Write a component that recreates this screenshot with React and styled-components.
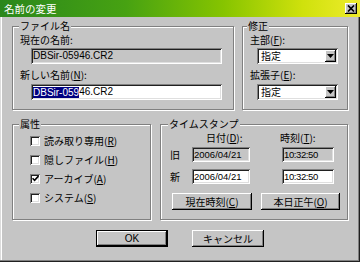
import React from "react";
import styled, { createGlobalStyle } from "styled-components";

const FACE = "#c5c5c5";
const JP = `"Noto Sans CJK JP", "Liberation Sans", sans-serif`;
const LATIN = `"Liberation Sans", "Noto Sans CJK JP", sans-serif`;

const raised = `inset -1px -1px #000, inset 1px 1px #fff, inset -2px -2px #808080`;
const sunken = `inset 1px 1px #808080, inset -1px -1px #fff, inset 2px 2px #202020, inset -2px -2px #dfdfdf`;

const GlobalStyle = createGlobalStyle`
  html, body {
    margin: 0;
    padding: 0;
    background: ${FACE};
  }
  body {
    font-family: ${JP};
    font-size: 10px;
    line-height: 12px;
    color: #000;
  }
  u {
    text-underline-offset: 1px;
  }
`;

const Window = styled.div`
  width: 360px;
  height: 262px;
  box-sizing: border-box;
  background: ${FACE};
  display: flex;
  flex-direction: column;
  overflow: hidden;
  box-shadow: inset -1px -1px #202020, inset -2px -2px #808080,
    inset 1px 0 #dcdcdc, inset 2px 0 #fff;
`;

const TitleBar = styled.div`
  flex: none;
  height: 17px;
  display: flex;
  align-items: center;
  justify-content: space-between;
  padding: 0 3px 0 4px;
  background: linear-gradient(
    90deg,
    #2a871c 0%,
    #47a212 35%,
    #86c400 62%,
    #cfe10c 84%,
    #eeec2c 100%
  );
  color: #fff;
  font-size: 10.5px;
  line-height: 17px;
`;

const CloseButton = styled.div`
  width: 12px;
  height: 11px;
  background: ${FACE};
  box-shadow: ${raised};
  display: flex;
  align-items: center;
  justify-content: center;
`;

const Body = styled.div`
  flex: 1;
  display: flex;
  flex-direction: column;
  padding: 0 12px;
`;

const Row = styled.div`
  display: flex;
  gap: ${(p) => p.$gap}px;
  margin-top: ${(p) => p.$mt}px;
  justify-content: ${(p) => (p.$center ? "center" : "flex-start")};
`;

const Group = styled.fieldset`
  margin: 0;
  padding: 0;
  min-width: 0;
  box-sizing: border-box;
  width: ${(p) => p.$w}px;
  height: ${(p) => p.$h}px;
  border: 1px solid #808080;
  box-shadow: inset 1px 1px #fff, 1px 1px #fff;
`;

const Legend = styled.legend`
  margin-left: ${(p) => p.$ml ?? 6}px;
  padding: 0 1px;
  font-size: 10px;
  line-height: 12px;
  background: ${FACE};
`;

const Stack = styled.div`
  display: flex;
  flex-direction: column;
  align-items: flex-start;
  padding-left: ${(p) => p.$pl}px;
`;

const Label = styled.div`
  margin-top: ${(p) => p.$mt || 0}px;
  height: 12px;
  white-space: nowrap;
`;

const Field = styled.div`
  box-sizing: border-box;
  width: ${(p) => p.$w}px;
  height: ${(p) => p.$h || 16}px;
  margin-left: ${(p) => p.$ml || 0}px;
  margin-top: ${(p) => p.$mt || 0}px;
  padding: 0 2px;
  display: flex;
  align-items: center;
  background: ${(p) => (p.$disabled ? FACE : "#fff")};
  box-shadow: ${sunken};
  font-family: ${LATIN};
  font-size: ${(p) => p.$fs || 10}px;
  letter-spacing: ${(p) => p.$ls || 0}px;
  white-space: nowrap;
  overflow: hidden;
`;

const Selected = styled.span`
  background: #000080;
  color: #fff;
  line-height: 11px;
`;

const Combo = styled.div`
  box-sizing: border-box;
  width: 81px;
  height: 16px;
  margin-left: 7px;
  margin-top: ${(p) => p.$mt || 0}px;
  padding: 2px;
  display: flex;
  align-items: center;
  justify-content: space-between;
  background: #fff;
  box-shadow: ${sunken};
`;

const ComboText = styled.span`
  padding-left: 2px;
  line-height: 12px;
`;

const ComboButton = styled.div`
  width: 11px;
  height: 12px;
  background: ${FACE};
  box-shadow: ${raised};
  display: flex;
  align-items: center;
  justify-content: center;
`;

const CheckRow = styled.div`
  height: 19px;
  margin-top: ${(p) => p.$mt || 0}px;
  display: flex;
  align-items: center;
  gap: 4px;
  white-space: nowrap;
`;

const CheckBox = styled.div`
  width: 10px;
  height: 10px;
  flex: none;
  background: #fff;
  box-shadow: ${sunken};
  display: flex;
  align-items: center;
  justify-content: center;
`;

const TsRow = styled.div`
  display: grid;
  grid-template-columns: 24px 58px 32px 52px;
  align-items: center;
  height: ${(p) => p.$h}px;
  margin-top: ${(p) => p.$mt}px;
`;

const TsCell = styled.div`
  grid-column: ${(p) => p.$col};
  margin-left: ${(p) => p.$ml || 0}px;
  white-space: nowrap;
`;

const ButtonRow = styled.div`
  display: flex;
  gap: 9px;
  margin-top: 9px;
  padding-left: 4px;
`;

const Button = styled.div`
  box-sizing: border-box;
  width: ${(p) => p.$w}px;
  height: 17px;
  display: flex;
  align-items: center;
  justify-content: center;
  background: ${FACE};
  border: ${(p) => (p.$default ? "1px solid #000" : "none")};
  box-shadow: ${raised};
  font-size: 10px;
  white-space: nowrap;
`;

const Latin = styled.span`
  font-family: ${LATIN};
`;

const DownArrow = () => (
  <svg width="7" height="4" viewBox="0 0 7 4">
    <path d="M0 0h7L3.5 4z" fill="#000" />
  </svg>
);

const CheckMark = () => (
  <svg width="7" height="7" viewBox="0 0 7 7">
    <path d="M0.5 3.2L2.6 5.4L6.5 1" stroke="#000" strokeWidth="1.6" fill="none" />
  </svg>
);

const SelectBox = ({ mt }) => (
  <Combo $mt={mt}>
    <ComboText>指定</ComboText>
    <ComboButton>
      <DownArrow />
    </ComboButton>
  </Combo>
);

export default function App() {
  return (
    <>
      <GlobalStyle />
      <Window>
        <TitleBar>
          <span>名前の変更</span>
          <CloseButton>
            <svg width="8" height="7" viewBox="0 0 8 7">
              <path d="M1 0.5L7 6.5M7 0.5L1 6.5" stroke="#000" strokeWidth="1.7" />
            </svg>
          </CloseButton>
        </TitleBar>
        <Body>
          <Row $mt={3} $gap={8}>
            <Group $w={222} $h={90}>
              <Legend>ファイル名</Legend>
              <Stack $pl={7}>
                <Label $mt={2}>現在の名前:</Label>
                <Field $w={191} $ml={11} $mt={2} $disabled>
                  DBSir-05946.CR2
                </Field>
                <Label $mt={5}>
                  新しい名前(<u>N</u>):
                </Label>
                <Field $w={191} $ml={11} $mt={3}>
                  <Selected>DBSir-059</Selected>46.CR2
                </Field>
              </Stack>
            </Group>
            <Group $w={106} $h={90}>
              <Legend $ml={4}>修正</Legend>
              <Stack $pl={7}>
                <Label $mt={2}>
                  主部(<u>F</u>):
                </Label>
                <SelectBox mt={2} />
                <Label $mt={5}>
                  拡張子(<u>E</u>):
                </Label>
                <SelectBox mt={3} />
              </Stack>
            </Group>
          </Row>

          <Row $mt={8} $gap={9}>
            <Group $w={139} $h={102}>
              <Legend>属性</Legend>
              <Stack $pl={17}>
                <CheckRow $mt={1}>
                  <CheckBox />
                  <span>読み取り専用(<u>R</u>)</span>
                </CheckRow>
                <CheckRow>
                  <CheckBox />
                  <span>隠しファイル(<u>H</u>)</span>
                </CheckRow>
                <CheckRow>
                  <CheckBox>
                    <CheckMark />
                  </CheckBox>
                  <span>アーカイブ(<u>A</u>)</span>
                </CheckRow>
                <CheckRow>
                  <CheckBox />
                  <span>システム(<u>S</u>)</span>
                </CheckRow>
              </Stack>
            </Group>
            <Group $w={188} $h={102}>
              <Legend $ml={7}>タイムスタンプ</Legend>
              <Stack $pl={7}>
                <TsRow $h={11} $mt={2}>
                  <TsCell $col="2 / span 2" $ml={14}>
                    日付(<u>D</u>):
                  </TsCell>
                  <TsCell $col="4" $ml={-2}>
                    時刻(<u>T</u>):
                  </TsCell>
                </TsRow>
                <TsRow $h={15} $mt={4}>
                  <TsCell $col="1" $ml={2}>旧</TsCell>
                  <TsCell $col="2">
                    <Field $w={58} $h={15} $fs={9.5} $disabled>
                      2006/04/21
                    </Field>
                  </TsCell>
                  <TsCell $col="4">
                    <Field $w={52} $h={15} $fs={9.5} $ls={-0.4} $disabled>
                      10:32:50
                    </Field>
                  </TsCell>
                </TsRow>
                <TsRow $h={15} $mt={7}>
                  <TsCell $col="1" $ml={2}>新</TsCell>
                  <TsCell $col="2">
                    <Field $w={58} $h={15} $fs={9.5}>
                      2006/04/21
                    </Field>
                  </TsCell>
                  <TsCell $col="4">
                    <Field $w={52} $h={15} $fs={9.5} $ls={-0.4}>
                      10:32:50
                    </Field>
                  </TsCell>
                </TsRow>
                <ButtonRow>
                  <Button $w={80}>
                    現在時刻(<u>C</u>)
                  </Button>
                  <Button $w={79}>
                    本日正午(<u>O</u>)
                  </Button>
                </ButtonRow>
              </Stack>
            </Group>
          </Row>

          <Row $mt={10} $gap={24} $center>
            <Button $w={72} $default>
              <Latin>OK</Latin>
            </Button>
            <Button $w={72}>キャンセル</Button>
          </Row>
        </Body>
      </Window>
    </>
  );
}
